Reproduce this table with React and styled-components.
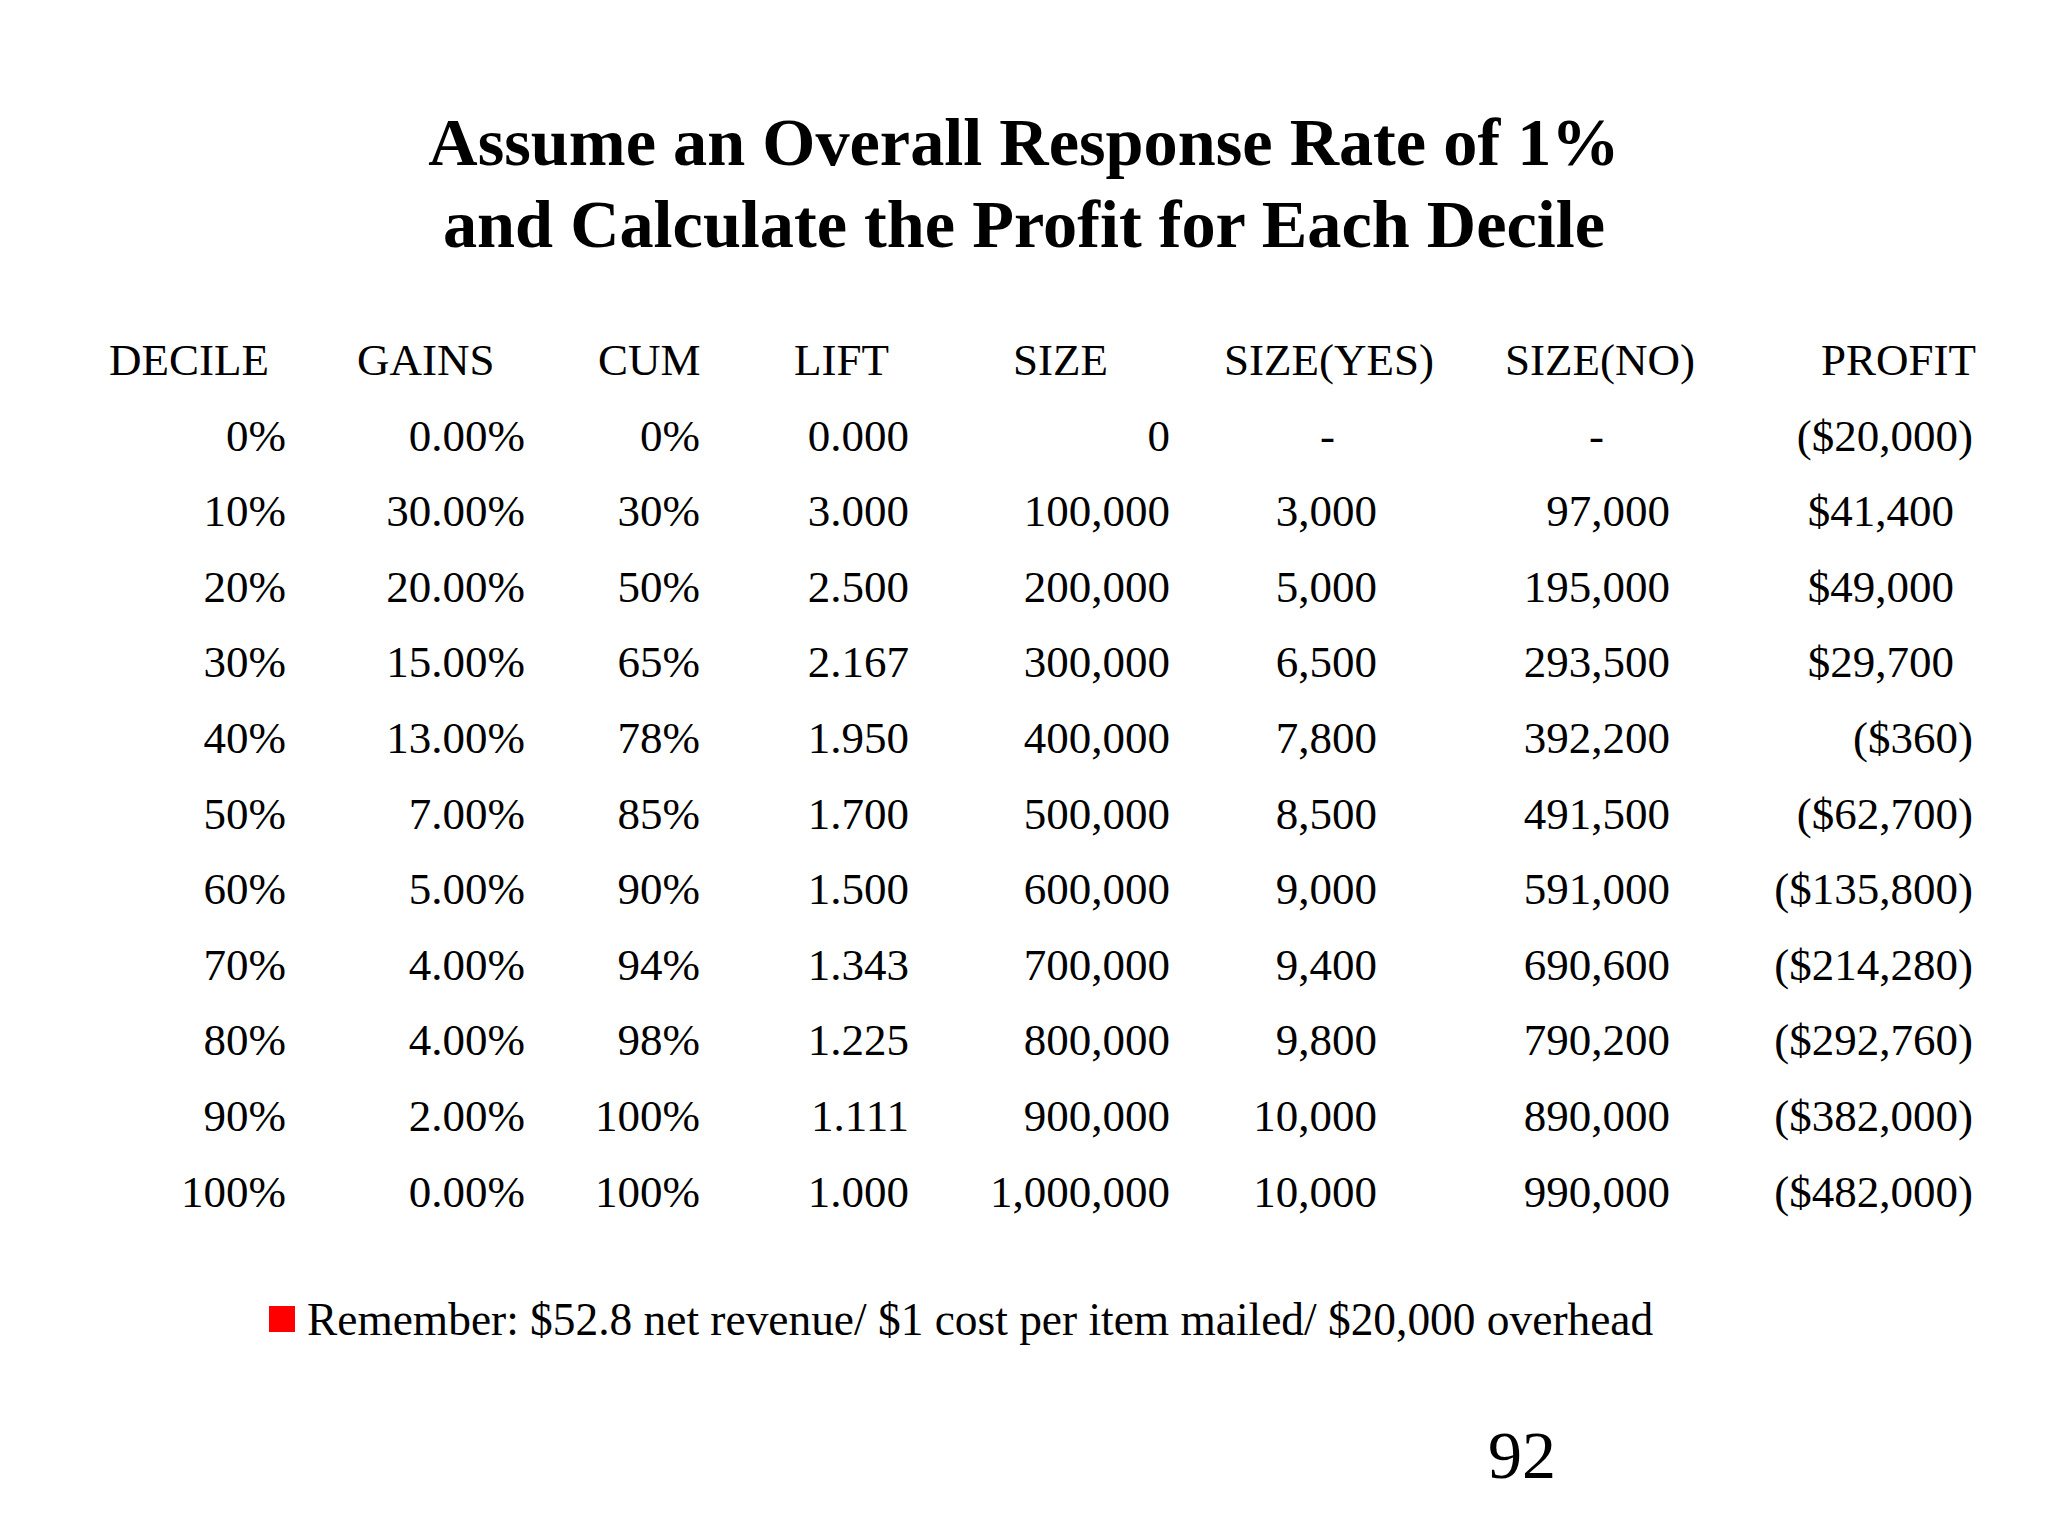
import React from "react";
import styled, { createGlobalStyle } from "styled-components";

const Global = createGlobalStyle`
  html, body {
    margin: 0;
    padding: 0;
    background: #ffffff;
  }
  body {
    font-family: "Liberation Serif", "Times New Roman", serif;
    color: #000000;
  }
`;

const Slide = styled.div`
  width: 2048px;
  height: 1536px;
  display: flex;
  flex-direction: column;
  background: #ffffff;
  overflow: hidden;
`;

const Title = styled.h1`
  margin: 101px 0 0;
  font-size: 68.3px;
  line-height: 82px;
  font-weight: 700;
  text-align: center;
`;

const Table = styled.div`
  margin: 58px 0 0 100px;
  display: grid;
  grid-template-columns: ${(p) => p.cols.map((c) => `${c}px`).join(" ")};
  grid-auto-rows: 75.6px;
  font-size: 45px;
  line-height: 75.6px;
`;

const HeadCell = styled.div`
  padding-left: ${(p) => p.offset}px;
  white-space: nowrap;
`;

const Cell = styled.div`
  text-align: right;
  padding-right: ${(p) => p.inset}px;
  white-space: nowrap;
`;

const Note = styled.div`
  margin-top: 63px;
  padding-left: 269px;
  display: flex;
  align-items: center;
  gap: 12px;
  font-size: 45.4px;
  line-height: 54px;
`;

const Bullet = styled.span`
  width: 26px;
  height: 26px;
  background: #ff0000;
  flex-shrink: 0;
  margin-top: -3px;
`;

const PageNo = styled.div`
  margin-top: 67px;
  padding-left: 1488px;
  font-size: 68px;
  line-height: 82px;
`;

// column widths + header offset + right inset of the numbers
const columns = [
  { w: 200, label: "DECILE", head: 9, inset: 14 },
  { w: 240, label: "GAINS", head: 57, inset: 15 },
  { w: 170, label: "CUM", head: 58, inset: 10 },
  { w: 220, label: "LIFT", head: 84, inset: 21 },
  { w: 260, label: "SIZE", head: 83, inset: 20 },
  { w: 260, label: "SIZE(YES)", head: 34, inset: 73, dash: 115 },
  { w: 250, label: "SIZE(NO)", head: 55, inset: 30, dash: 96 },
  { w: 290, label: "PROFIT", head: 121, inset: 17, plus: 36 },
];

const rows = [
  ["0%", "0.00%", "0%", "0.000", "0", "-", "-", "($20,000)"],
  ["10%", "30.00%", "30%", "3.000", "100,000", "3,000", "97,000", "$41,400"],
  ["20%", "20.00%", "50%", "2.500", "200,000", "5,000", "195,000", "$49,000"],
  ["30%", "15.00%", "65%", "2.167", "300,000", "6,500", "293,500", "$29,700"],
  ["40%", "13.00%", "78%", "1.950", "400,000", "7,800", "392,200", "($360)"],
  ["50%", "7.00%", "85%", "1.700", "500,000", "8,500", "491,500", "($62,700)"],
  ["60%", "5.00%", "90%", "1.500", "600,000", "9,000", "591,000", "($135,800)"],
  ["70%", "4.00%", "94%", "1.343", "700,000", "9,400", "690,600", "($214,280)"],
  ["80%", "4.00%", "98%", "1.225", "800,000", "9,800", "790,200", "($292,760)"],
  ["90%", "2.00%", "100%", "1.111", "900,000", "10,000", "890,000", "($382,000)"],
  ["100%", "0.00%", "100%", "1.000", "1,000,000", "10,000", "990,000", "($482,000)"],
];

const insetFor = (col, value) => {
  if (value === "-" && col.dash) return col.dash;
  if (col.plus && !value.startsWith("(")) return col.plus;
  return col.inset;
};

export default function App() {
  return (
    <Slide>
      <Global />
      <Title>
        Assume an Overall Response Rate of 1%
        <br />
        and Calculate the Profit for Each Decile
      </Title>
      <Table cols={columns.map((c) => c.w)}>
        {columns.map((c) => (
          <HeadCell key={c.label} offset={c.head}>
            {c.label}
          </HeadCell>
        ))}
        {rows.map((row, r) =>
          row.map((v, i) => (
            <Cell key={`${r}-${i}`} inset={insetFor(columns[i], v)}>
              {v}
            </Cell>
          ))
        )}
      </Table>
      <Note>
        <Bullet />
        <span>Remember: $52.8 net revenue/ $1 cost per item mailed/ $20,000 overhead</span>
      </Note>
      <PageNo>92</PageNo>
    </Slide>
  );
}
